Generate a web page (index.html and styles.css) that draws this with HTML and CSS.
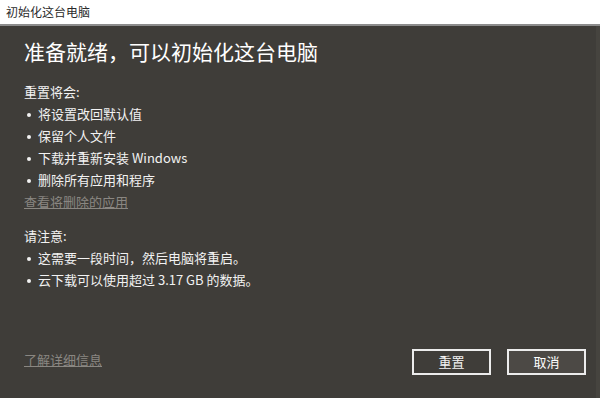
FILE: index.html
```html
<!DOCTYPE html>
<html lang="zh-CN">
<head>
<meta charset="utf-8">
<title>初始化这台电脑</title>
<link rel="stylesheet" href="styles.css">
</head>
<body>
<div class="window">
  <div class="titlebar">初始化这台电脑</div>
  <div class="content">
    <h1 class="heading">准备就绪，可以初始化这台电脑</h1>
    <p class="label first">重置将会:</p>
    <ul class="list">
      <li>将设置改回默认值</li>
      <li>保留个人文件</li>
      <li>下载并重新安装 Windows</li>
      <li>删除所有应用和程序</li>
    </ul>
    <a class="link">查看将删除的应用</a>
    <p class="label second">请注意:</p>
    <ul class="list">
      <li>这需要一段时间，然后电脑将重启。</li>
      <li>云下载可以使用超过 3.17 GB 的数据。</li>
    </ul>
    <div class="footer">
      <a class="link">了解详细信息</a>
      <div class="buttons">
        <button class="btn">重置</button>
        <button class="btn cancel">取消</button>
      </div>
    </div>
  </div>
</div>
</body>
</html>
```
FILE: styles.css
```css
* { box-sizing: border-box; }
html, body {
  margin: 0;
  padding: 0;
  width: 600px;
  height: 398px;
  overflow: hidden;
  font-family: "Noto Sans CJK SC", "Noto Sans", sans-serif;
}
.window {
  width: 600px;
  height: 398px;
  display: flex;
  flex-direction: column;
  background: #3f3d39;
}
.titlebar {
  height: 26px;
  background: #ffffff;
  color: #2a2a2a;
  font-size: 12px;
  line-height: 24px;
  padding-left: 6px;
  border-bottom: 2px solid #8c8c8c;
}
.content {
  flex: 1;
  display: flex;
  flex-direction: column;
  padding: 0 10px 23px 24px;
  color: #f2f2f2;
  border-right: 4px solid #46443f;
}
.heading {
  margin: 11px 0 0;
  font-size: 21px;
  font-weight: normal;
  line-height: 28px;
  color: #ffffff;
}
.label {
  margin: 0;
  font-size: 13px;
  line-height: 22px;
}
.label.first { margin-top: 16px; }
.label.second { margin-top: 12px; }
.list {
  list-style: none;
  margin: 0;
  padding: 0;
  font-size: 13px;
  line-height: 22px;
}
.list li {
  position: relative;
  padding-left: 14px;
}
.list li::before {
  content: "";
  position: absolute;
  left: 3px;
  top: 10px;
  width: 4px;
  height: 4px;
  border-radius: 50%;
  background: #f2f2f2;
}
.link {
  font-size: 13px;
  line-height: 22px;
  color: #8a8782;
  text-decoration: underline;
  align-self: flex-start;
}
.footer {
  margin-top: auto;
  display: flex;
  align-items: center;
  justify-content: space-between;
}
.buttons {
  display: flex;
  gap: 16px;
}
.btn {
  width: 79px;
  height: 26px;
  border: 2px solid #ececec;
  background: #3f3d39;
  color: #f2f2f2;
  font-family: "Noto Sans CJK SC", sans-serif;
  font-size: 13px;
  padding: 0;
  line-height: 20px;
}
.btn.cancel {
  background: #4c4945;
  color: #ffffff;
}
```
